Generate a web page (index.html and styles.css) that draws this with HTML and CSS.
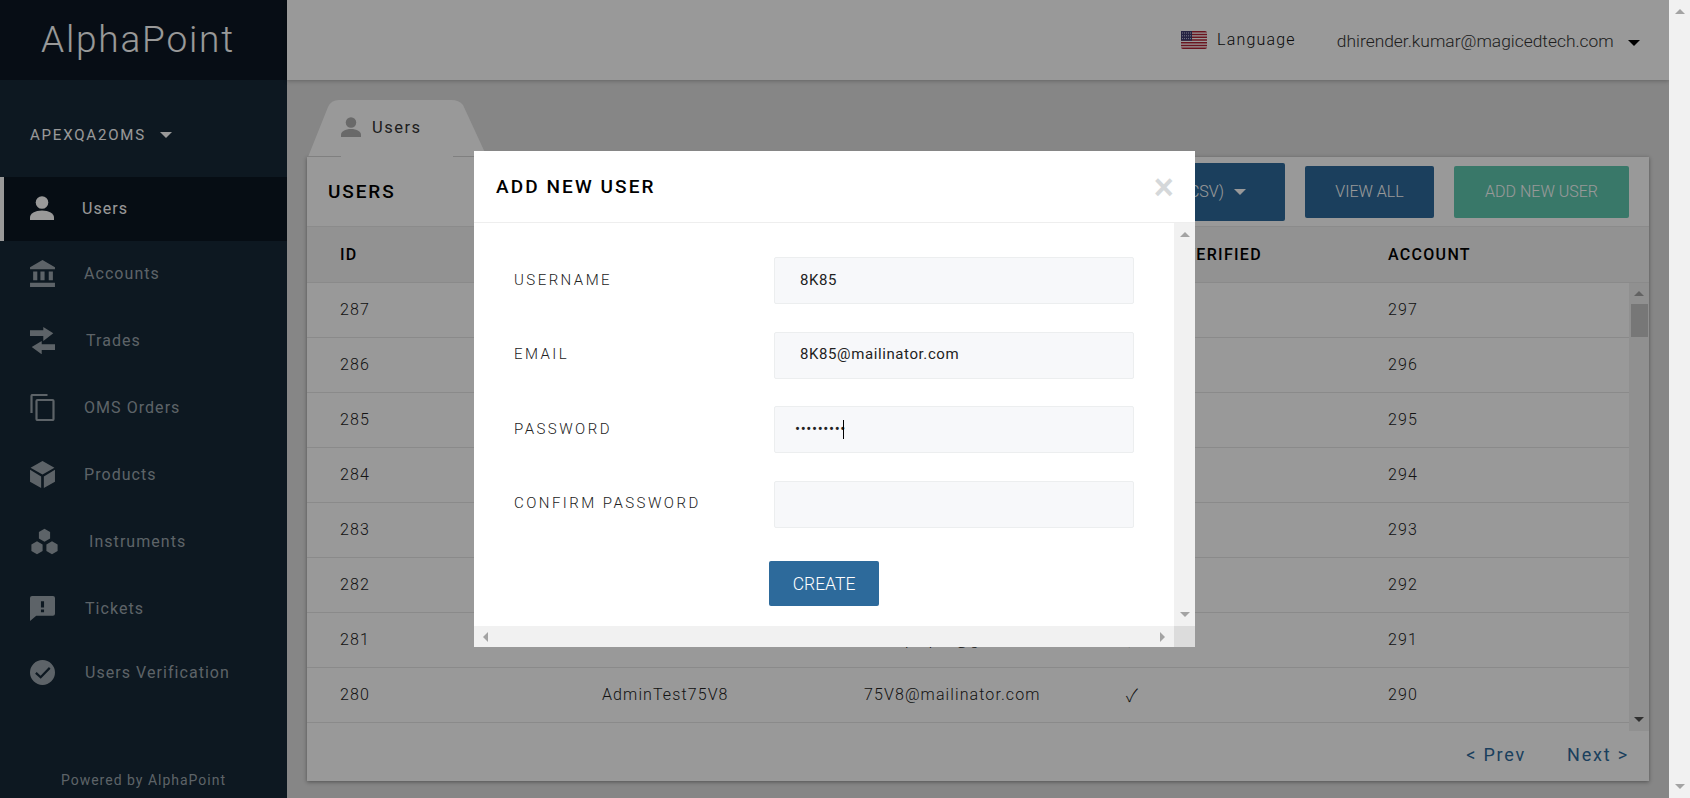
FILE: index.html
```html
<!DOCTYPE html>
<html>
  <head>
    <title>AlphaPoint Admin</title>
    <link rel="stylesheet" href="styles.css">
  </head>
  <body>
    <div class="app">
      <aside class="sidebar">
        <div class="logo">AlphaPoint</div>
        <div class="oms-select">APEXQA2OMS <span class="caret caret-side"></span></div>
        <nav class="nav">
          <a href="#" class="nav-link active">
            <svg class="nav-icon" viewBox="0 0 24 24"><circle cx="12" cy="6.500" r="6.300"/><path d="M0 24v-2.500c0-4 5-7 12-7s12 3 12 7V24z"/></svg>
            <span class="nav-text">Users</span>
          </a>
          <a href="#" class="nav-link">
            <svg class="nav-icon" viewBox="0 0 24 26"><path d="M12 0l12 7v2H0V7zM3 11v8.500h4V11zM10 11v8.500h4V11zM18 11v8.500h4V11zM0 22v4h24v-4z"/></svg>
            <span class="nav-text">Accounts</span>
          </a>
          <a href="#" class="nav-link">
            <svg class="nav-icon" viewBox="0 0 25 27"><path d="M13.300 0l10 6.300-10 7.700V9H0V3.300h13.300zM11.700 14v3.300H25V23H11.700v4.300L1.700 20z"/></svg>
            <span class="nav-text nudge-2">Trades</span>
          </a>
          <a href="#" class="nav-link">
            <svg class="nav-icon icon-line" viewBox="0 0 24 27"><path d="M1 19V2a1 1 0 0 1 1-1h15"/><path d="M7 6h15a1 1 0 0 1 1 1v18a1 1 0 0 1-1 1H7a1 1 0 0 1-1-1V7a1 1 0 0 1 1-1z"/></svg>
            <span class="nav-text">OMS Orders</span>
          </a>
          <a href="#" class="nav-link">
            <svg class="nav-icon" viewBox="0 0 24 26"><path d="M12 0l11.500 6.500L12 13 .5 6.500zM0 8.500l10.700 6.500v11L0 20zM24 8.500V20l-10.700 6V15z"/></svg>
            <span class="nav-text">Products</span>
          </a>
          <a href="#" class="nav-link">
            <svg class="nav-icon icon-wide" viewBox="0 0 28 27"><path d="M14 .8l5.600 3.200v6.500L14 13.700l-5.600-3.200V4zM6.500 13.300l5.600 3.200V23l-5.600 3.200L.9 23v-6.500zM21.500 13.300l5.600 3.200V23l-5.600 3.200-5.600-3.200v-6.500z"/></svg>
            <span class="nav-text nudge-3">Instruments</span>
          </a>
          <a href="#" class="nav-link">
            <svg class="nav-icon" viewBox="0 0 24 24"><path fill-rule="evenodd" d="M2 0h20a2 2 0 0 1 2 2v15a2 2 0 0 1-2 2H6l-6 5V2a2 2 0 0 1 2-2zM10.500 5v6h3V5zM10.500 13v2.700h3V13z"/></svg>
            <span class="nav-text nudge-1">Tickets</span>
          </a>
          <a href="#" class="nav-link nav-last">
            <svg class="nav-icon" viewBox="0 0 24 24"><path fill-rule="evenodd" d="M12 0a12 12 0 1 1 0 24 12 12 0 0 1 0-24zM18.200 6.800l-8 8.200-3.800-3.500-1.500 1.600 5.400 5 9.400-9.800z"/></svg>
            <span class="nav-text nudge-1">Users Verification</span>
          </a>
        </nav>
        <div class="powered">Powered by AlphaPoint</div>
      </aside>

      <div class="main">
        <header class="topbar">
          <div class="language">
            <svg class="flag" viewBox="0 0 26 18">
              <rect width="26" height="18" rx="2" fill="#b22234"/>
              <path d="M0 2.100h26M0 4.850h26M0 7.600h26M0 10.400h26M0 13.150h26M0 15.900h26" stroke="#fff" stroke-width="1.380"/>
              <rect width="11" height="9.700" fill="#3c3b6e"/>
              <path d="M1 2h9M1 4.800h9M1 7.600h9" stroke="#c8c8e0" stroke-width="1" stroke-dasharray="1 1"/>
            </svg>
            <span class="language-text">Language</span>
          </div>
          <div class="account"><span class="account-name">dhirender.kumar@magicedtech.com</span> <span class="caret caret-dark"></span></div>
        </header>

        <section class="content">
          <div class="tab">
            <svg class="tab-shape" viewBox="0 0 179 58">
              <path d="M0 57L20 7Q23 0 31 0H143Q151 0 155 5L179 57z" fill="#fff"/>
              <path d="M0 56.500H33M145 56.500H179" stroke="#d5d5d5" stroke-width="1"/>
            </svg>
            <svg class="tab-icon" viewBox="0 0 24 24"><circle cx="12" cy="6.500" r="6.300"/><path d="M0 24v-2.500c0-4 5-7 12-7s12 3 12 7V24z"/></svg>
            <span class="tab-text">Users</span>
          </div>

          <div class="card">
            <div class="card-head">
              <h2>USERS</h2>
              <div class="actions">
                <a href="#" class="btn btn-export">EXPORT (CSV) <span class="caret caret-btn"></span></a>
                <a href="#" class="btn btn-blue">VIEW ALL</a>
                <a href="#" class="btn btn-green">ADD NEW USER</a>
              </div>
            </div>

            <div class="table-row table-head">
              <div>ID</div>
              <div>USERNAME</div>
              <div>EMAIL</div>
              <div>EMAIL VERIFIED</div>
              <div>ACCOUNT</div>
            </div>

            <div class="table-wrap">
              <div class="table-body">
                <div class="table-row"><div>287</div><div>AdminTest8K84</div><div>8K84@mailinator.com</div><div class="check">&#10003;</div><div>297</div></div>
                <div class="table-row"><div>286</div><div>AdminTest8K83</div><div>8K83@mailinator.com</div><div class="check">&#10003;</div><div>296</div></div>
                <div class="table-row"><div>285</div><div>AdminTest8K82</div><div>8K82@mailinator.com</div><div class="check">&#10003;</div><div>295</div></div>
                <div class="table-row"><div>284</div><div>AdminTest8K81</div><div>8K81@mailinator.com</div><div class="check">&#10003;</div><div>294</div></div>
                <div class="table-row"><div>283</div><div>AdminTest8K80</div><div>8K80@mailinator.com</div><div class="check">&#10003;</div><div>293</div></div>
                <div class="table-row"><div>282</div><div>AdminTest75V9</div><div>75V9@mailinator.com</div><div class="check">&#10003;</div><div>292</div></div>
                <div class="table-row"><div>281</div><div>AdminTest75V7</div><div>arun.p.kpat@gmail.com</div><div class="check">&#10003;</div><div>291</div></div>
                <div class="table-row"><div>280</div><div>AdminTest75V8</div><div>75V8@mailinator.com</div><div class="check">&#10003;</div><div>290</div></div>
              </div>
              <div class="scrollbar scrollbar-table">
                <span class="arrow arrow-up"></span>
                <span class="thumb"></span>
                <span class="arrow arrow-down arrow-dark"></span>
              </div>
            </div>

            <div class="pager">
              <a href="#">&lt; Prev</a>
              <a href="#">Next &gt;</a>
            </div>
          </div>
        </section>
      </div>

      <div class="page-scroll">
        <span class="arrow arrow-up"></span>
        <span class="arrow arrow-down"></span>
      </div>

      <div class="overlay"></div>

      <div class="modal">
        <div class="modal-head">
          <h3>ADD NEW USER</h3>
          <span class="modal-close">&times;</span>
        </div>
        <div class="modal-scroll">
          <form class="modal-body">
            <div class="field">
              <label>USERNAME</label>
              <input type="text" value="8K85">
            </div>
            <div class="field">
              <label>EMAIL</label>
              <input type="text" value="8K85@mailinator.com">
            </div>
            <div class="field">
              <label>PASSWORD</label>
              <div class="input-wrap">
                <input type="password" value="123456789">
                <span class="text-cursor"></span>
              </div>
            </div>
            <div class="field">
              <label>CONFIRM PASSWORD</label>
              <input type="password">
            </div>
            <button type="button" class="btn-create">CREATE</button>
          </form>
          <div class="scrollbar scrollbar-modal">
            <span class="arrow arrow-up"></span>
            <span class="arrow arrow-down"></span>
          </div>
          <div class="scrollbar-h">
            <span class="arrow arrow-left"></span>
            <span class="arrow arrow-right"></span>
          </div>
          <div class="scroll-corner"></div>
        </div>
      </div>
    </div>
  </body>
</html>
```

FILE: styles.css
```css
* {
  box-sizing: border-box;
}

body {
  font-family: Roboto, Arial, sans-serif;
  margin: 0;
  padding: 0;
  overflow: hidden;
}

a {
  text-decoration: none;
}

.app {
  display: flex;
  position: relative;
  width: 1690px;
  height: 798px;
  overflow: hidden;
}

/* sidebar */
.sidebar {
  width: 287px;
  flex-shrink: 0;
  background-color: #162837;
  display: flex;
  flex-direction: column;
}

.logo {
  width: 288px;
  height: 80px;
  background-color: #0c1723;
  color: #fff;
  font-size: 37px;
  font-weight: 300;
  letter-spacing: 1.8px;
  padding-left: 41px;
  line-height: 79px;
}

.oms-select {
  height: 97px;
  padding: 12px 0 0 30px;
  display: flex;
  align-items: center;
  color: #fff;
  font-size: 15px;
  letter-spacing: 1.8px;
  gap: 14px;
}

.nav {
  display: flex;
  flex-direction: column;
}

.nav-link {
  height: 67px;
  display: flex;
  align-items: center;
  padding: 0 0 2px 30px;
  color: #9ca6ad;
  font-size: 16px;
  letter-spacing: 1.05px;
}

.nav-link.active {
  height: 64px;
  background-color: #0b1622;
  border-left: 4px solid #fff;
  padding-left: 26px;
  color: #fff;
}

.nav-last {
  margin-top: -3px;
}

.nav-icon {
  width: 25px;
  height: 27px;
  fill: currentColor;
  flex-shrink: 0;
  margin-right: 29px;
}

.nav-link.active .nav-icon {
  width: 24px;
  height: 24px;
  margin-right: 28px;
}

.icon-line {
  fill: none;
  stroke: currentColor;
  stroke-width: 2.200;
}

.icon-wide {
  width: 29px;
}

.nudge-1 {
  margin-left: 1px;
}

.nudge-2 {
  margin-left: 2px;
}

.nudge-3 {
  margin-left: 1px;
}

.powered {
  margin-top: auto;
  padding-bottom: 8px;
  text-align: center;
  color: #9ca6ad;
  font-size: 14px;
  letter-spacing: 1px;
  line-height: 20px;
}

.caret {
  display: inline-block;
  width: 0;
  height: 0;
  border-left: 6px solid transparent;
  border-right: 6px solid transparent;
  border-top: 6px solid #fff;
}

.caret-dark {
  border-top-color: #000;
  margin-left: 10px;
  vertical-align: 1px;
}

.caret-btn {
  margin-left: 6px;
  vertical-align: 2px;
}

/* top bar */
.main {
  flex: 1;
  min-width: 0;
  background-color: #dfdfdf;
  display: flex;
  flex-direction: column;
}

.topbar {
  height: 80px;
  background-color: #fff;
  box-shadow: 0 1px 4px rgba(0, 0, 0, 0.25);
  display: flex;
  justify-content: flex-end;
  align-items: center;
  padding-right: 29px;
  position: relative;
}

.language {
  display: flex;
  align-items: center;
  gap: 10px;
  color: #111;
  font-size: 16px;
  font-weight: 300;
  letter-spacing: 1.2px;
  margin-right: 41px;
}

.language-text {
  padding-bottom: 2px;
}

.flag {
  width: 26px;
  height: 18px;
}

.account {
  color: #333;
  font-size: 17.400px;
  font-weight: 300;
  padding-top: 2px;
}

/* content */
.content {
  padding: 20px 20px 0 20px;
}

.tab {
  width: 179px;
  height: 57px;
  margin-left: 1px;
  position: relative;
  display: flex;
  align-items: center;
  padding: 0 0 3px 33px;
  color: #333;
  font-size: 16.500px;
  letter-spacing: 1.5px;
}

.tab-shape {
  position: absolute;
  left: 0;
  top: 0;
  width: 179px;
  height: 58px;
}

.tab-icon {
  width: 20px;
  height: 20px;
  fill: #b0b0b0;
  margin-right: 11px;
  position: relative;
}

.tab-text {
  position: relative;
}

.card {
  width: 1342px;
  height: 624px;
  background-color: #fff;
  box-shadow: 0 1px 4px rgba(0, 0, 0, 0.4);
}

.card-head {
  height: 70px;
  display: flex;
  justify-content: space-between;
  align-items: center;
  padding: 0 20px 0 21px;
  border-bottom: 1px solid #e8e8e8;
}

.card-head h2 {
  margin: 0;
  font-size: 19px;
  font-weight: 500;
  letter-spacing: 1.9px;
  color: #000;
}

.actions {
  display: flex;
  align-items: center;
  gap: 20px;
}

.btn {
  height: 52px;
  display: flex;
  align-items: center;
  justify-content: center;
  border-radius: 2px;
  color: #fff;
  font-size: 16px;
  font-weight: 300;
}

.btn-export {
  height: 58px;
  width: 240px;
  justify-content: flex-end;
  padding-right: 39px;
  gap: 4px;
  background-color: #2d6a9b;
}

.btn-blue {
  width: 129px;
  background-color: #2d6a9b;
}

.btn-green {
  width: 175px;
  background-color: #60c9b0;
}

.table-row {
  display: grid;
  grid-template-columns: repeat(5, 262px);
  padding: 0 0 2px 33px;
  height: 55px;
  align-items: center;
  border-bottom: 1px solid #e6e6e6;
  font-size: 16px;
  font-weight: 300;
  letter-spacing: 1.1px;
  color: #222;
}

.table-head {
  height: 56px;
  padding-bottom: 0;
  background-color: #f4f4f4;
  font-weight: 500;
  color: #000;
  letter-spacing: 1.3px;
}

.check {
  font-family: "Noto Sans CJK JP", sans-serif;
  font-size: 18px;
  font-weight: 300;
}

.table-wrap {
  display: flex;
  height: 448px;
}

.table-body {
  width: 1322px;
  flex-shrink: 0;
}

.scrollbar {
  display: flex;
  flex-direction: column;
  align-items: center;
}

.scrollbar-table {
  width: 20px;
  background-color: #f1f1f1;
  padding-top: 8px;
  padding-bottom: 9px;
  justify-content: space-between;
  position: relative;
}

.thumb {
  position: absolute;
  top: 21px;
  left: 2px;
  width: 17px;
  height: 33px;
  background-color: #c6c6c6;
}

.arrow {
  display: block;
  width: 0;
  height: 0;
  border-style: solid;
  border-color: transparent;
}

.arrow-up {
  border-width: 0 5px 5px 5px;
  border-bottom-color: #a3a3a3;
}

.arrow-down {
  border-width: 5px 5px 0 5px;
  border-top-color: #a3a3a3;
}

.arrow-dark {
  border-top-color: #505050;
}

.arrow-left {
  border-width: 5px 5px 5px 0;
  border-right-color: #a3a3a3;
}

.arrow-right {
  border-width: 5px 0 5px 5px;
  border-left-color: #a3a3a3;
}

.pager {
  display: flex;
  justify-content: flex-end;
  gap: 41px;
  padding: 13px 20px 0 0;
  font-size: 18px;
  letter-spacing: 1.8px;
  font-weight: 400;
}

.pager a {
  color: #2d6a9b;
}

/* page scrollbar, stays above the overlay */
.page-scroll {
  width: 21px;
  flex-shrink: 0;
  background-color: #f1f1f1;
  display: flex;
  flex-direction: column;
  justify-content: space-between;
  align-items: center;
  padding: 9px 0;
  position: relative;
  z-index: 3;
}

.overlay {
  position: absolute;
  left: 0;
  top: 0;
  right: 0;
  bottom: 0;
  background-color: rgba(0, 0, 0, 0.4);
  z-index: 2;
}

/* modal */
.modal {
  position: absolute;
  left: 474px;
  top: 151px;
  width: 721px;
  height: 496px;
  background-color: #fff;
  z-index: 4;
  display: flex;
  flex-direction: column;
}

.modal-head {
  height: 72px;
  flex-shrink: 0;
  display: flex;
  justify-content: space-between;
  align-items: center;
  padding: 0 21px 0 22px;
  border-bottom: 1px solid #eeeeee;
}

.modal-head h3 {
  margin: 0;
  font-size: 19px;
  font-weight: 500;
  letter-spacing: 2.1px;
  color: #000;
}

.modal-close {
  color: #d5d8da;
  font-size: 38px;
  font-weight: 500;
  line-height: 32px;
}

.modal-scroll {
  flex: 1;
  min-height: 0;
  display: grid;
  grid-template-columns: 700px 21px;
  grid-template-rows: 403px 21px;
}

.modal-body {
  padding: 34px 41px 0 40px;
  display: flex;
  flex-direction: column;
  align-items: stretch;
}

.field {
  display: grid;
  grid-template-columns: 260px 360px;
  align-items: center;
  height: 47px;
  margin-bottom: 27.500px;
}

.field label {
  font-size: 15px;
  font-weight: 300;
  letter-spacing: 2.450px;
  color: #222;
  padding-bottom: 2px;
}

.field input {
  width: 100%;
  height: 47px;
  border: 1px solid #eceeef;
  border-radius: 2px;
  background-color: #f7f8fa;
  padding: 0 25px 2px 25px;
  font-family: Roboto, Arial, sans-serif;
  font-size: 15px;
  letter-spacing: 0.6px;
  color: #222;
  outline: none;
}

.field input[type="password"] {
  padding-left: 20px;
}

.input-wrap {
  position: relative;
}

.text-cursor {
  position: absolute;
  left: 69px;
  top: 14px;
  width: 1px;
  height: 19px;
  background-color: #000;
}

.btn-create {
  align-self: flex-start;
  margin-left: 255px;
  margin-top: 6px;
  width: 110px;
  height: 45px;
  border: 0;
  border-radius: 2px;
  background-color: #2d6a9b;
  color: #fff;
  font-family: Roboto, Arial, sans-serif;
  font-size: 17.500px;
  font-weight: 300;
}

.scrollbar-modal {
  background-color: #f1f1f1;
  justify-content: space-between;
  padding: 9px 0;
}

.scrollbar-h {
  background-color: #f1f1f1;
  display: flex;
  justify-content: space-between;
  align-items: center;
  padding: 0 9px;
}

.scroll-corner {
  background-color: #dcdcdc;
}
```
